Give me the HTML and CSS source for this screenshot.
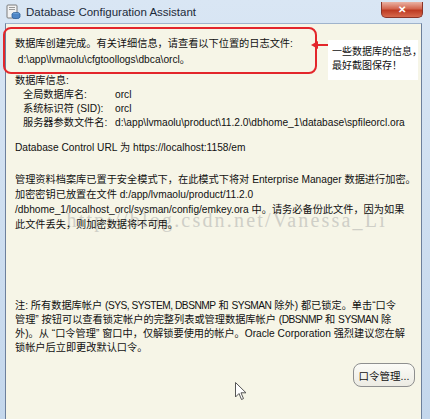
FILE: index.html
```html
<!DOCTYPE html>
<html lang="zh-CN">
<head>
  <meta charset="UTF-8">
  <title>Database Configuration Assistant</title>
  <link rel="stylesheet" href="styles.css">
</head>
<body>
  <div class="window">
    <div class="titlebar">
      <svg class="app-icon" width="15" height="16" viewBox="0 0 15 16">
        <rect x="1" y="1" width="10" height="13" rx="1" fill="#f2f2f2" stroke="#7d7d7d"/>
        <rect x="3" y="3" width="6" height="1" fill="#9a9a9a"/>
        <rect x="3" y="5" width="6" height="1" fill="#9a9a9a"/>
        <ellipse cx="10" cy="10" rx="4" ry="1.6" fill="#6aa0d8" stroke="#2f5f99" stroke-width="0.8"/>
        <path d="M6 10 v3 a4 1.6 0 0 0 8 0 v-3" fill="#4f86c6" stroke="#2f5f99" stroke-width="0.8"/>
      </svg>
      <span class="title">Database Configuration Assistant</span>
      <div class="close">&#x2715;</div>
    </div>

    <div class="client">
      <div class="msg">
        <p class="first">数据库创建完成。有关详细信息，请查看以下位置的日志文件:<br>&nbsp;d:\app\lvmaolu\cfgtoollogs\dbca\orcl。</p>

        <p class="dbinfo-title">数据库信息:</p>
        <div class="dbinfo">
          <span>全局数据库名:</span><span>orcl</span>
          <span>系统标识符 (SID):</span><span>orcl</span>
          <span>服务器参数文件名:</span><span>d:\app\lvmaolu\product\11.2.0\dbhome_1\database\spfileorcl.ora</span>
        </div>

        <p class="url">Database Control URL 为 https://localhost:1158/em</p>

        <div class="crypt">
          <div class="watermark">http://blog.csdn.net/Vanessa_Li</div>
          <p>管理资料档案库已置于安全模式下，在此模式下将对 Enterprise Manager 数据进行加密。<br>加密密钥已放置在文件 d:/app/lvmaolu/product/11.2.0<br>/dbhome_1/localhost_orcl/sysman/config/emkey.ora 中。请务必备份此文件，因为如果<br>此文件丢失，则加密数据将不可用。</p>
        </div>

        <p class="note">注: 所有数据库帐户 <span class="caps">(SYS, SYSTEM, DBSNMP</span> 和 <span class="caps">SYSMAN</span> 除外) 都已锁定。单击“口令<br>管理” 按钮可以查看锁定帐户的完整列表或管理数据库帐户 <span class="caps">(DBSNMP</span> 和 <span class="caps">SYSMAN</span> 除<br>外)。从 “口令管理” 窗口中，仅解锁要使用的帐户。Oracle Corporation 强烈建议您在解<br>锁帐户后立即更改默认口令。</p>
      </div>

      <div class="actions">
        <button class="btn">口令管理...</button>
      </div>
    </div>

    <!-- annotation drawn on top of the screenshot -->
    <div class="mark-box"></div>
    <div class="mark-arrow"></div>
    <div class="callout">一些数据库的信息，<br>最好截图保存！</div>

    <svg class="cursor" width="12" height="19" viewBox="0 0 12 19">
      <path d="M0.5 0.5 L0.5 15 L4 11.5 L6.5 17.5 L8.5 16.6 L6 10.8 L11 10.8 Z" fill="#fff" stroke="#555" stroke-width="1"/>
    </svg>
  </div>
</body>
</html>
```

FILE: styles.css
```css
html, body {
  margin: 0;
  padding: 0;
}
body {
  width: 430px;
  height: 419px;
  overflow: hidden;
  font-family: "Liberation Sans", "Noto Sans CJK SC", sans-serif;
  font-size: 10.2px;
  color: #111;
}
.window {
  position: relative;
  height: 419px;
  display: flex;
  flex-direction: column;
  background: linear-gradient(#d9e6f4, #c4d7ec);
}
.titlebar {
  height: 23px;
  display: flex;
  align-items: center;
  padding-left: 6px;
  position: relative;
}
.app-icon {
  margin-right: 5px;
}
.title {
  font-size: 11.5px;
  color: #1c2a3a;
}
.close {
  position: absolute;
  top: 2px;
  right: 7px;
  width: 40px;
  height: 15px;
  border: 1px solid #8a3428;
  border-top: none;
  border-radius: 0 0 5px 5px;
  background: linear-gradient(#eab2a4, #d3654e 45%, #bd3a22 55%, #d7694d);
  color: #fff;
  font-size: 10px;
  font-weight: bold;
  text-align: center;
  line-height: 15px;
}
.client {
  flex: 1;
  margin: 0 8px 0 5px;
  border-left: 1px solid #6d809c;
  border-right: 1px solid #6d809c;
  border-top: 1px solid #9fb3cc;
  background: #f6f5e7;
  padding: 12px 0 0 9px;
  display: flex;
  flex-direction: column;
  white-space: nowrap;
}
.msg p {
  margin: 0;
  line-height: 15px;
}
.msg .first {
  line-height: 16px;
}
.dbinfo-title {
  margin-top: 5px !important;
}
.dbinfo {
  display: grid;
  grid-template-columns: 92px auto;
  margin-left: 8px;
  line-height: 14px;
}
.url {
  margin-top: 10px !important;
}
.crypt {
  position: relative;
  margin-top: 17px;
}
.crypt p {
  position: relative;
}
.watermark {
  position: absolute;
  right: 34px;
  top: 36px;
  line-height: 24px;
  font-family: "Liberation Serif", serif;
  font-size: 20px;
  color: #cfcfc7;
  letter-spacing: 2.2px;
}
.note {
  margin-top: 67px !important;
  line-height: 14px !important;
}
.caps {
  letter-spacing: -0.5px;
}
.actions {
  display: flex;
  justify-content: flex-end;
  padding: 8px 6px 0 0;
}
.btn {
  font-family: "Liberation Sans", "Noto Sans CJK SC", sans-serif;
  font-size: 10.5px;
  color: #111;
  width: 62px;
  height: 24px;
  padding: 0;
  border: 1px solid #8e8f8f;
  border-radius: 8px;
  background: linear-gradient(#fbfbf7, #ecebe3);
}
.mark-box {
  position: absolute;
  left: 3px;
  top: 27px;
  width: 310px;
  height: 43px;
  border: 2px solid #e3262b;
  border-radius: 8px;
}
.mark-arrow {
  position: absolute;
  left: 317px;
  top: 44px;
  width: 16px;
  height: 2px;
  background: #e3262b;
}
.mark-arrow::before {
  content: "";
  position: absolute;
  left: -6px;
  top: -3px;
  border-right: 7px solid #e3262b;
  border-top: 4px solid transparent;
  border-bottom: 4px solid transparent;
}
.callout {
  position: absolute;
  left: 328px;
  top: 40px;
  width: 90px;
  height: 40px;
  padding: 5px 0 0 4px;
  box-sizing: border-box;
  background: #fff;
  font-size: 10px;
  line-height: 14px;
  color: #111;
  white-space: nowrap;
}
.cursor {
  position: absolute;
  left: 235px;
  top: 382px;
}
```
